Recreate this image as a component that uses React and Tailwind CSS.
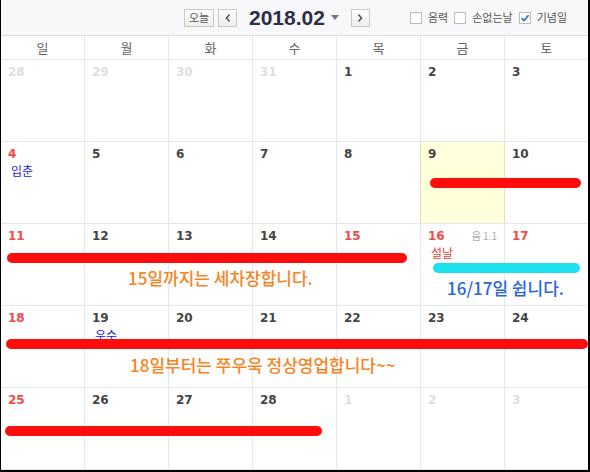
import React from "react";

const KR = { fontFamily: '"Noto Sans CJK KR", "Noto Sans", sans-serif' };

const weekDays = ["일", "월", "화", "수", "목", "금", "토"];

const weeks = [
  [
    { d: 28, other: true },
    { d: 29, other: true },
    { d: 30, other: true },
    { d: 31, other: true },
    { d: 1 },
    { d: 2 },
    { d: 3 },
  ],
  [
    { d: 4, red: true, label: "입춘", labelColor: "text-[#1a1ad6]" },
    { d: 5 },
    { d: 6 },
    { d: 7 },
    { d: 8, yellowEdge: true },
    { d: 9, today: true },
    { d: 10 },
  ],
  [
    { d: 11, red: true },
    { d: 12 },
    { d: 13 },
    { d: 14 },
    { d: 15, red: true },
    { d: 16, red: true, lunar: "음 1.1", label: "설날", labelColor: "text-[#e8403a]" },
    { d: 17, red: true },
  ],
  [
    { d: 18, red: true },
    { d: 19, label: "우수", labelColor: "text-[#1a1ad6]" },
    { d: 20 },
    { d: 21 },
    { d: 22 },
    { d: 23 },
    { d: 24 },
  ],
  [
    { d: 25, red: true },
    { d: 26 },
    { d: 27 },
    { d: 28 },
    { d: 1, other: true },
    { d: 2, other: true },
    { d: 3, other: true },
  ],
];

// marker strokes and notes drawn over each week
const overlays = [
  null,
  (
    <div className="absolute left-[429px] top-[36px] h-[10px] w-[151px] rounded-full bg-[#ff0c0c]" />
  ),
  (
    <>
      <div className="absolute left-[6px] top-[29px] h-[10px] w-[400px] rounded-full bg-[#ff0c0c]" />
      <div className="absolute left-[432px] top-[39px] h-[10px] w-[147px] rounded-full bg-[#1ee1f0]" />
      <div className="absolute left-[127px] top-[44px] text-[17px] leading-[20px] font-medium text-[#f6841f]" style={KR}>
        15일까지는 세차장합니다.
      </div>
      <div className="absolute left-[446px] top-[54px] text-[17px] leading-[20px] font-medium text-[#2b66d8]" style={KR}>
        16/17일 쉽니다.
      </div>
    </>
  ),
  (
    <>
      <div className="absolute left-[5px] top-[33px] h-[10px] w-[582px] rounded-full bg-[#ff0c0c]" />
      <div className="absolute left-[129px] top-[49px] text-[17px] leading-[20px] font-medium text-[#f6841f]" style={KR}>
        18일부터는 쭈우욱 정상영업합니다~~
      </div>
    </>
  ),
  (
    <div className="absolute left-[4px] top-[38px] h-[10px] w-[317px] rounded-full bg-[#ff0c0c]" />
  ),
];

const Cell = ({ day, last }) => {
  let color = "text-[#444]";
  if (day.red) color = "text-[#f04a4a]";
  if (day.other) color = "text-[#dedede]";
  const edge = day.today || day.yellowEdge ? "border-[#e2e2bc]" : "border-[#e4e7eb]";
  return (
    <div
      className={`h-full pl-[7px] pt-[4px] ${last ? "" : "border-r"} ${edge} ${
        day.today ? "bg-[#ffffdc]" : ""
      }`}
    >
      <div className="flex items-center justify-between pr-[6px]">
        <span
          className={`text-[12px] leading-[16px] font-bold ${color}`}
          style={{ fontFamily: '"DejaVu Sans", sans-serif' }}
        >
          {day.d}
        </span>
        {day.lunar && (
          <span className="text-[10px] leading-[16px] text-[#aaa] mr-[1px]" style={KR}>
            {day.lunar}
          </span>
        )}
      </div>
      {day.label && (
        <div className={`ml-[3px] mt-[1px] text-[12px] leading-[16px] ${day.labelColor}`} style={KR}>
          {day.label}
        </div>
      )}
    </div>
  );
};

const Checkbox = ({ label, checked }) => (
  <div className="flex items-center gap-[6px]">
    <span className="w-[12px] h-[12px] border border-[#bbb] bg-white flex items-center justify-center">
      {checked && (
        <svg width="10" height="10" viewBox="0 0 10 10">
          <path d="M1.5 5.2 L4 7.6 L8.6 2.2" stroke="#2f6fc4" strokeWidth="1.7" fill="none" />
        </svg>
      )}
    </span>
    <span className="text-[11px] text-[#555] leading-none" style={KR}>
      {label}
    </span>
  </div>
);

const NavButton = ({ children, className = "" }) => (
  <div
    className={`h-[18px] border border-[#c9c9c9] bg-gradient-to-b from-white to-[#ededed] flex items-center justify-center text-[11px] text-[#555] ${className}`}
    style={KR}
  >
    {children}
  </div>
);

export default function App() {
  return (
    <div className="w-[590px] h-[472px] bg-white border-l border-r-2 border-b-2 border-black overflow-hidden">
      <div className="h-[36px] bg-[#f8f8fa] border-b border-[#dcdde1] flex items-center pl-[183px]">
        <NavButton className="w-[30px]">오늘</NavButton>
        <NavButton className="w-[19px] ml-[4px]">
          <svg width="8" height="10" viewBox="0 0 8 10">
            <path d="M5.5 1.5 L2.5 5 L5.5 8.5" stroke="#555" strokeWidth="1.6" fill="none" />
          </svg>
        </NavButton>
        <span
          className="ml-[12px] text-[21px] font-bold text-[#2c2d47] leading-none"
          style={{ fontFamily: '"Liberation Sans", Arial, sans-serif' }}
        >
          2018.02
        </span>
        <svg className="ml-[6px]" width="8" height="6" viewBox="0 0 8 6">
          <path d="M0 0 H8 L4 5 Z" fill="#777" />
        </svg>
        <NavButton className="w-[19px] ml-[12px]">
          <svg width="8" height="10" viewBox="0 0 8 10">
            <path d="M2.5 1.5 L5.5 5 L2.5 8.5" stroke="#555" strokeWidth="1.6" fill="none" />
          </svg>
        </NavButton>
        <div className="ml-[40px] flex items-center gap-[6px]">
          <Checkbox label="음력" />
          <Checkbox label="손없는날" />
          <Checkbox label="기념일" checked />
        </div>
      </div>

      <div className="h-[24px] grid grid-cols-[repeat(6,84px)_83px] border-b border-[#e4e7eb]">
        {weekDays.map((w, i) => (
          <div
            key={w}
            className={`flex items-center justify-center text-[13px] text-[#666] ${
              i < 6 ? "border-r border-[#e4e7eb]" : ""
            }`}
            style={KR}
          >
            {w}
          </div>
        ))}
      </div>

      {weeks.map((week, wi) => (
        <div
          key={wi}
          className="relative h-[82px] grid grid-cols-[repeat(6,84px)_83px] border-b border-[#e4e7eb]"
        >
          {week.map((day, di) => (
            <Cell key={di} day={day} last={di === 6} />
          ))}
          {overlays[wi]}
        </div>
      ))}
    </div>
  );
}
